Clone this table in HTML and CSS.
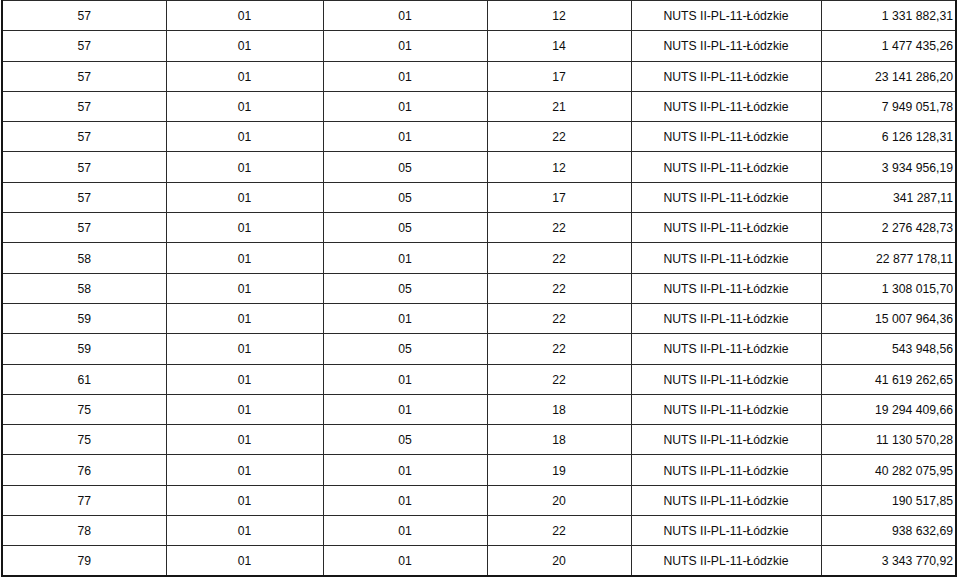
FILE: index.html
```html
<!DOCTYPE html>
<html lang="pl">
<head>
<meta charset="utf-8">
<title>NUTS II-PL-11-Łódzkie</title>
<link rel="stylesheet" href="styles.css">
</head>
<body>
<table class="data">
<colgroup>
<col class="c1"><col class="c2"><col class="c3"><col class="c4"><col class="c5"><col class="c6">
</colgroup>
<tbody>
<tr><td>57</td><td>01</td><td>01</td><td>12</td><td>NUTS II-PL-11-Łódzkie</td><td class="num">1 331 882,31</td></tr>
<tr><td>57</td><td>01</td><td>01</td><td>14</td><td>NUTS II-PL-11-Łódzkie</td><td class="num">1 477 435,26</td></tr>
<tr><td>57</td><td>01</td><td>01</td><td>17</td><td>NUTS II-PL-11-Łódzkie</td><td class="num">23 141 286,20</td></tr>
<tr><td>57</td><td>01</td><td>01</td><td>21</td><td>NUTS II-PL-11-Łódzkie</td><td class="num">7 949 051,78</td></tr>
<tr><td>57</td><td>01</td><td>01</td><td>22</td><td>NUTS II-PL-11-Łódzkie</td><td class="num">6 126 128,31</td></tr>
<tr><td>57</td><td>01</td><td>05</td><td>12</td><td>NUTS II-PL-11-Łódzkie</td><td class="num">3 934 956,19</td></tr>
<tr><td>57</td><td>01</td><td>05</td><td>17</td><td>NUTS II-PL-11-Łódzkie</td><td class="num">341 287,11</td></tr>
<tr><td>57</td><td>01</td><td>05</td><td>22</td><td>NUTS II-PL-11-Łódzkie</td><td class="num">2 276 428,73</td></tr>
<tr><td>58</td><td>01</td><td>01</td><td>22</td><td>NUTS II-PL-11-Łódzkie</td><td class="num">22 877 178,11</td></tr>
<tr><td>58</td><td>01</td><td>05</td><td>22</td><td>NUTS II-PL-11-Łódzkie</td><td class="num">1 308 015,70</td></tr>
<tr><td>59</td><td>01</td><td>01</td><td>22</td><td>NUTS II-PL-11-Łódzkie</td><td class="num">15 007 964,36</td></tr>
<tr><td>59</td><td>01</td><td>05</td><td>22</td><td>NUTS II-PL-11-Łódzkie</td><td class="num">543 948,56</td></tr>
<tr><td>61</td><td>01</td><td>01</td><td>22</td><td>NUTS II-PL-11-Łódzkie</td><td class="num">41 619 262,65</td></tr>
<tr><td>75</td><td>01</td><td>01</td><td>18</td><td>NUTS II-PL-11-Łódzkie</td><td class="num">19 294 409,66</td></tr>
<tr><td>75</td><td>01</td><td>05</td><td>18</td><td>NUTS II-PL-11-Łódzkie</td><td class="num">11 130 570,28</td></tr>
<tr><td>76</td><td>01</td><td>01</td><td>19</td><td>NUTS II-PL-11-Łódzkie</td><td class="num">40 282 075,95</td></tr>
<tr><td>77</td><td>01</td><td>01</td><td>20</td><td>NUTS II-PL-11-Łódzkie</td><td class="num">190 517,85</td></tr>
<tr><td>78</td><td>01</td><td>01</td><td>22</td><td>NUTS II-PL-11-Łódzkie</td><td class="num">938 632,69</td></tr>
<tr><td>79</td><td>01</td><td>01</td><td>20</td><td>NUTS II-PL-11-Łódzkie</td><td class="num">3 343 770,92</td></tr>
</tbody>
</table>
</body>
</html>
```

FILE: styles.css
```css
html, body {
  margin: 0;
  padding: 0;
  background: #ffffff;
}

body {
  font-family: "Liberation Sans", Arial, sans-serif;
  font-size: 12.2px;
  color: #0d0d0d;
}

.data {
  border-collapse: collapse;
  table-layout: fixed;
  width: 956px;
  margin-left: 1px;
  border-top: 1px solid #2a2a2a;
  border-left: 2px solid #151515;
  border-right: 2px solid #151515;
  border-bottom: 2px solid #151515;
}

.c1 { width: 164px; }
.c2 { width: 157px; }
.c3 { width: 164px; }
.c4 { width: 144px; }
.c5 { width: 190px; }
.c6 { width: 135px; }

.data tr {
  height: 30.3px;
}

.data td {
  border: 1px solid #2a2a2a;
  padding: 1px 0 0 0;
  text-align: center;
  vertical-align: middle;
  white-space: nowrap;
  line-height: 14px;
}

.data td.num {
  text-align: right;
  padding-right: 2px;
}
```
